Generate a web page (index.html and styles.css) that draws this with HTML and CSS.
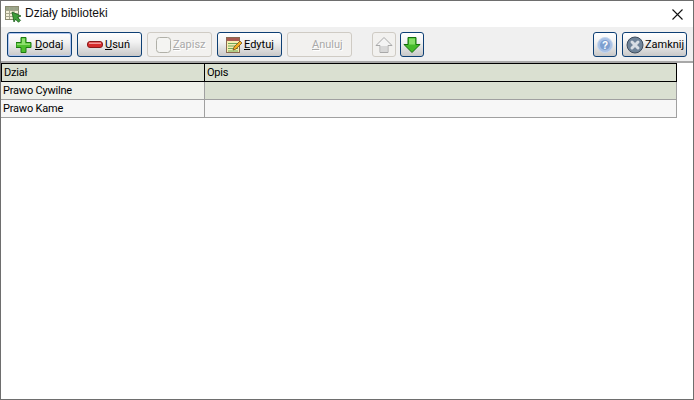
FILE: index.html
```html
<!DOCTYPE html>
<html lang="pl">
<head>
<meta charset="utf-8">
<title>Działy biblioteki</title>
<link rel="stylesheet" href="styles.css">
</head>
<body>
<div class="window">
  <header class="titlebar">
    <svg class="app-icon" width="18" height="18" viewBox="0 0 18 18">
      <rect x="1.500" y="1.500" width="13" height="13" fill="#f4f0d8" stroke="#8a8a70"/>
      <rect x="2" y="2" width="12" height="3" fill="#9aa58a"/>
      <path d="M1.500 5.500h13M1.500 8.500h13M1.500 11.500h13M5.500 2v12M10 2v12" stroke="#a8a890" fill="none"/>
      <path d="M8 7l9 4-3.500 1.300 3 3-2 2-3-3L10 17z" fill="#3f9e3a" stroke="#1d5c1c" stroke-width=".8"/>
    </svg>
    <span class="title">Działy biblioteki</span>
    <svg class="close" width="11" height="11" viewBox="0 0 11 11"><path d="M.5.500l10 10M10.500.500l-10 10" stroke="#111" stroke-width="1.100" fill="none"/></svg>
  </header>
  <div class="toolbar">
    <button class="btn default"><svg class="ic" width="19" height="18" viewBox="1 0 19 18"><path d="M6 1.500h5v5h5v5h-5v5H6v-5H1v-5h5z" fill="#4fc02f" stroke="#1c7a12"/><path d="M7 2.500h3v5H7zM2 7.500h13v1.500H2z" fill="#8fe070"/></svg><span><u>D</u>odaj</span></button>
    <button class="btn"><svg class="ic minus" width="19" height="18" viewBox="0 0 19 18"><rect x="1.500" y="5.500" width="15" height="6" rx="2.500" fill="#d62c2c" stroke="#8a1a1a"/><rect x="3" y="6.500" width="12" height="1.500" fill="#f29a9a"/></svg><span><u>U</u>suń</span></button>
    <button class="btn off tight"><svg class="ic" width="18" height="18" viewBox="0 0 18 18"><rect x="1.500" y="1.500" width="14" height="15" rx="3" fill="#f4f4f2" stroke="#b0b0a8"/></svg><span><u>Z</u>apisz</span></button>
    <button class="btn tight"><svg class="ic" width="19" height="18" viewBox="0 0 19 18"><rect x="1.500" y="1.500" width="13" height="15" fill="#f6efb0" stroke="#8a6a50"/><rect x="2" y="2" width="12" height="3" fill="#a85a50"/><path d="M3 7.500h10M3 10h10M3 12.500h10M3 15h10" stroke="#6fa85a"/><path d="M8 14l1-3 6-6 2 2-6 6z" fill="#f0b020" stroke="#704010" stroke-width=".7"/></svg><span><u>E</u>dytuj</span></button>
    <button class="btn off text-only"><span><u>A</u>nuluj</span></button>
    <button class="btn sq off first-arrow"><svg width="18" height="18" viewBox="0 0 18 18"><path d="M9 1.500l8 8h-4v7H5v-7H1z" fill="#f4f4f4" stroke="#a8a8a8"/><path d="M6 10h6v6H6z" fill="#d8d8d8"/></svg></button>
    <button class="btn sq second-arrow"><svg width="18" height="18" viewBox="0 0 18 18"><path d="M5 1.500h8v7h4l-8 8-8-8h4z" fill="#45bb2a" stroke="#146e0c"/><path d="M6 2.500h6v6H6z" fill="#86de68"/></svg></button>
    <div class="spring"></div>
    <button class="btn sq"><svg width="18" height="18" viewBox="0 0 18 18"><circle cx="9" cy="9" r="7.500" fill="#a8c0e4" stroke="#c4d6ee"/><circle cx="9" cy="9" r="5" fill="#7d9fd0"/><text x="9" y="12.500" class="q">?</text></svg></button>
    <button class="btn close-btn"><svg class="ic" width="19" height="18" viewBox="0 0 19 18"><circle cx="9" cy="9" r="8" fill="#6f8398" stroke="#3e4d5e"/><path d="M6 6l6 6M12 6l-6 6" stroke="#d8dee4" stroke-width="3" stroke-linecap="round"/></svg><span>Zamknij</span></button>
  </div>
  <div class="grid">
    <div class="cell head c1">Dział</div>
    <div class="cell head c2">Opis</div>
    <div class="cell c1 fixed">Prawo Cywilne</div>
    <div class="cell c2 sel">&nbsp;</div>
    <div class="cell c1 plain">Prawo Kame</div>
    <div class="cell c2 plain">&nbsp;</div>
  </div>
</div>
</body>
</html>
```
FILE: styles.css
```css
* { box-sizing: border-box; }
html, body { margin: 0; padding: 0; }
body { width: 694px; height: 400px; overflow: hidden; background: #fff; font-family: Roboto, "Liberation Sans", Arial, sans-serif; font-size: 11px; color: #000; }
.window { width: 694px; height: 400px; border: 1px solid #6e6e6e; display: flex; flex-direction: column; background: #fff; }
.titlebar { height: 26px; flex: none; display: flex; align-items: center; padding: 0 10px 0 3px; background: #fff; }
.app-icon { margin-right: 3px; }
.title { font-family: "Liberation Sans", Arial, sans-serif; font-size: 12px; flex: 1; color: #111; position: relative; top: -1px; }
.toolbar { height: 36px; flex: none; display: flex; align-items: flex-start; gap: 5px; padding: 5px 6px 0 6px; background: #f0f0f0; border-bottom: 2px solid #a8a8a8; }
.btn { width: 65px; height: 25px; padding: 0 0 0 8px; margin: 0; display: flex; align-items: center; font: inherit; color: #000; border: 1px solid #0d3f74; border-radius: 3px; background: linear-gradient(#ffffff 0%, #f2f2f2 40%, #c8c8c8 100%); }
.default { box-shadow: inset 0 0 0 1px #b4c8f0; }
.btn.off { border-color: #cfcbc4; background: #f2f1ef; color: #a9a9a9; text-shadow: 1px 1px 0 #fff; }
.tight { padding-left: 7px; }
.text-only { padding-left: 24px; }
.sq { width: 24px; padding: 0; justify-content: center; }
.first-arrow { margin-left: 15px; }
.second-arrow { margin-left: -1px; }
.spring { flex: 1; }
.close-btn { padding-left: 3px; }
.q { font: bold 10px "Liberation Sans", sans-serif; fill: #fff; text-anchor: middle; }
.grid { width: 676px; display: grid; grid-template-columns: 204px 472px; }
.cell { height: 18px; line-height: 18px; padding-left: 2px; white-space: nowrap; letter-spacing: -0.2px; background: #f7f7f7; border-right: 1px solid #a0a0a0; border-bottom: 1px solid #a0a0a0; }
.head { height: 19px; background: #dae0d1; border-top: 1px solid #000; border-bottom: 1px solid #000; border-right: 1px solid #000; line-height: 17px; }
.head.c1 { border-left: 1px solid #000; padding-left: 2px; }
.fixed { background: #eff1ea; }
.sel { background: #dae0d1; }
```
